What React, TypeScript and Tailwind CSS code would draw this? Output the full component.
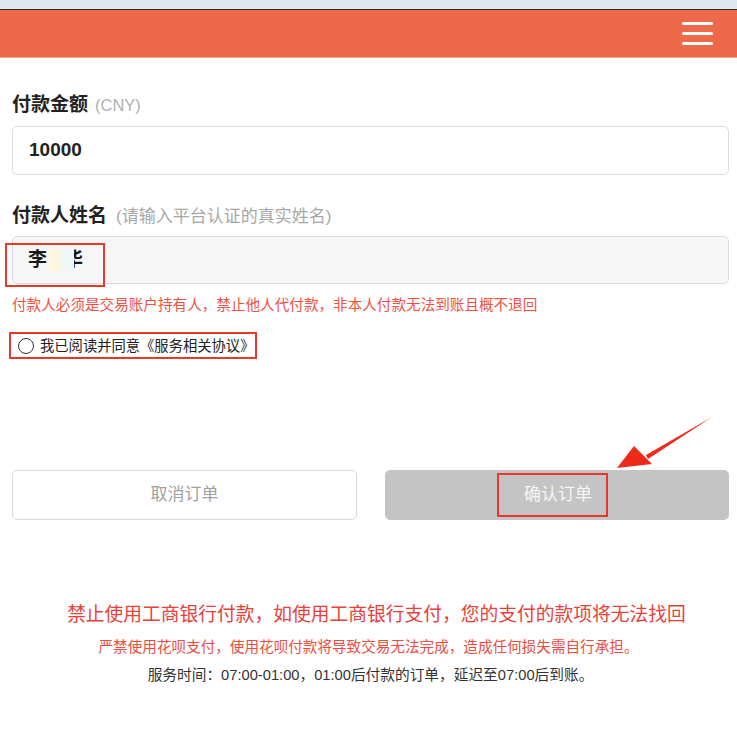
import React from "react";

const font = { fontFamily: '"Liberation Sans", "Noto Sans CJK SC", sans-serif' };

export default function App() {
  return (
    <div className="relative w-[737px] h-[729px] bg-white overflow-hidden" style={font}>
      {/* browser strip */}
      <div className="h-[10px] bg-[#dce8ee] border-b border-[#2a2a2a]" />
      {/* header */}
      <div className="h-[48px] bg-[#ed6949] flex items-center justify-end pr-[24px] border-b border-[#f3a08c]">
        <div className="flex flex-col gap-[7px]">
          <div className="w-[31px] h-[3px] rounded-full bg-white" />
          <div className="w-[31px] h-[3px] rounded-full bg-white" />
          <div className="w-[31px] h-[3px] rounded-full bg-white" />
        </div>
      </div>

      <div className="px-[12px] pr-[8px]">
        <div className="mt-[35px] h-[24px] flex items-baseline">
          <span className="text-[19px] font-bold text-[#222] leading-[24px]">付款金额</span>
          <span className="ml-[7px] text-[16.5px] text-[#b0b0b0] leading-[24px]">(CNY)</span>
        </div>
        <div className="mt-[9px] h-[49px] border border-[#dcdcdc] rounded-[5px] flex items-center pl-[16px]">
          <span className="text-[19px] font-bold text-[#222]">10000</span>
        </div>

        <div className="mt-[29px] h-[24px] flex items-baseline">
          <span className="text-[19px] font-bold text-[#222] leading-[24px]">付款人姓名</span>
          <span className="ml-[9px] text-[17px] text-[#a8a8a8] leading-[24px]">(请输入平台认证的真实姓名)</span>
        </div>
        <div className="relative mt-[8px] h-[48px] border border-[#dcdcdc] rounded-[5px] bg-[#f7f7f7] flex items-center pl-[15px]">
          <span className="text-[19px] font-bold text-[#1a1a1a]">李</span>
          <span className="relative inline-block w-[44px] h-[24px]">
            <span className="absolute left-[17px] top-0 text-[19px] font-bold text-[#1a1a1a] leading-[24px]">华</span>
            <span className="absolute left-[0px] top-[1px] w-[14px] h-[22px] bg-[#fdf7e2]" />
            <span className="absolute left-[14px] top-[1px] w-[13px] h-[22px] bg-[#eff8f9]" />
          </span>
          <div className="absolute left-[-8px] top-[6px] w-[100px] h-[44px] border-2 border-[#e8382a]" />
        </div>

        <div className="mt-[11px] h-[20px] text-[14.6px] leading-[20px] text-[#ef5244]">
          付款人必须是交易账户持有人，禁止他人代付款，非本人付款无法到账且概不退回
        </div>

        <div className="mt-[17px] ml-[-3px] w-[248px] h-[27px] border-2 border-[#e8382a] flex items-center pl-[7px] gap-[6px]">
          <span className="w-[16px] h-[16px] rounded-full border-[1.5px] border-[#333] shrink-0" />
          <span className="text-[14.3px] text-[#222] leading-[20px] whitespace-nowrap">我已阅读并同意《服务相关协议》</span>
        </div>

        <div className="mt-[111px] flex gap-[28px]">
          <div className="w-[346px] h-[50px] border border-[#d8d8d8] rounded-[5px] flex items-center justify-center">
            <span className="text-[17px] text-[#a0a0a0]">取消订单</span>
          </div>
          <div className="w-[345px] h-[50px] rounded-[5px] bg-[#c4c4c4] flex items-center justify-center">
            <div className="mr-[9px] w-[111px] h-[44px] border-2 border-[#e8382a] flex items-center justify-center">
              <span className="text-[17px] text-[#f7f7f7] ml-[11px]">确认订单</span>
            </div>
          </div>
        </div>
      </div>

      <div className="mt-[82px] flex flex-col items-center">
        <div className="ml-[16px] h-[26px] leading-[26px] text-[18.75px] text-[#e8413a]">
          禁止使用工商银行付款，如使用工商银行支付，您的支付的款项将无法找回
        </div>
        <div className="mt-[8px] h-[22px] leading-[22px] text-[14.6px] text-[#ee4c40]">
          严禁使用花呗支付，使用花呗付款将导致交易无法完成，造成任何损失需自行承担。
        </div>
        <div className="mt-[6px] ml-[4px] h-[22px] leading-[22px] text-[14.7px] text-[#333]">
          服务时间：07:00-01:00，01:00后付款的订单，延迟至07:00后到账。
        </div>
      </div>

      {/* arrow annotation */}
      <svg className="absolute left-0 top-0 pointer-events-none" width="737" height="729">
        <polygon points="712,417 646,455 648,459" fill="#ee2a1a" />
        <polygon points="617,468 634,446 652,464" fill="#ee2a1a" />
      </svg>
    </div>
  );
}
